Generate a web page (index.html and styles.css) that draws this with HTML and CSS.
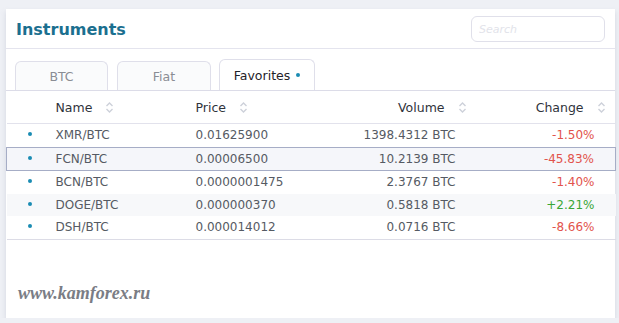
FILE: index.html
```
<!DOCTYPE html>
<html lang="en">

<head>
    <meta charset="UTF-8">
    <meta name="viewport" content="width=device-width, initial-scale=1.0">
    <title>Instruments</title>
    <link rel="stylesheet" href="styles.css">
</head>

<body>
    <div class="card">
        <div class="head">
            <h1 class="title">Instruments</h1>
            <input class="search" type="text" placeholder="Search">
        </div>

        <div class="tabs">
            <div class="tab tab_btc">BTC</div>
            <div class="tab tab_fiat">Fiat</div>
            <div class="tab tab_fav active">Favorites <span class="tab_dot"></span></div>
        </div>

        <table class="list">
            <colgroup>
                <col class="c_dot">
                <col class="c_name">
                <col class="c_price">
                <col class="c_vol">
                <col class="c_chg">
            </colgroup>
            <thead>
                <tr>
                    <th></th>
                    <th class="left">Name <span class="sort"><svg width="9" height="13" viewBox="0 0 9 13"><path d="M1.5 5 L4.5 2 L7.5 5 M1.5 8 L4.5 11 L7.5 8" fill="none" stroke="#cdd1da" stroke-width="1.4"/></svg></span></th>
                    <th class="left">Price <span class="sort"><svg width="9" height="13" viewBox="0 0 9 13"><path d="M1.5 5 L4.5 2 L7.5 5 M1.5 8 L4.5 11 L7.5 8" fill="none" stroke="#cdd1da" stroke-width="1.4"/></svg></span></th>
                    <th class="right">Volume <span class="sort"><svg width="9" height="13" viewBox="0 0 9 13"><path d="M1.5 5 L4.5 2 L7.5 5 M1.5 8 L4.5 11 L7.5 8" fill="none" stroke="#cdd1da" stroke-width="1.4"/></svg></span></th>
                    <th class="right">Change <span class="sort"><svg width="9" height="13" viewBox="0 0 9 13"><path d="M1.5 5 L4.5 2 L7.5 5 M1.5 8 L4.5 11 L7.5 8" fill="none" stroke="#cdd1da" stroke-width="1.4"/></svg></span></th>
                </tr>
            </thead>
            <tbody>
                <tr>
                    <td><span class="dot"></span></td>
                    <td>XMR/BTC</td>
                    <td>0.01625900</td>
                    <td class="right">1398.4312 BTC</td>
                    <td class="right down">-1.50%</td>
                </tr>
                <tr class="hover">
                    <td><span class="dot"></span></td>
                    <td>FCN/BTC</td>
                    <td>0.00006500</td>
                    <td class="right">10.2139 BTC</td>
                    <td class="right down">-45.83%</td>
                </tr>
                <tr>
                    <td><span class="dot"></span></td>
                    <td>BCN/BTC</td>
                    <td>0.0000001475</td>
                    <td class="right">2.3767 BTC</td>
                    <td class="right down">-1.40%</td>
                </tr>
                <tr class="odd">
                    <td><span class="dot"></span></td>
                    <td>DOGE/BTC</td>
                    <td>0.000000370</td>
                    <td class="right">0.5818 BTC</td>
                    <td class="right up">+2.21%</td>
                </tr>
                <tr>
                    <td><span class="dot"></span></td>
                    <td>DSH/BTC</td>
                    <td>0.000014012</td>
                    <td class="right">0.0716 BTC</td>
                    <td class="right down">-8.66%</td>
                </tr>
            </tbody>
        </table>

        <div class="mark">www.kamforex.ru</div>
    </div>
</body>

</html>
```

FILE: styles.css
```
body {
    margin: 0;
    background-color: #eef0f5;
    font-family: "DejaVu Sans", Verdana, sans-serif;
    font-size: 12px;
    color: #555a63;
}

.card {
    width: 609px;
    height: 309px;
    margin-left: 6px;
    margin-top: 9px;
    background-color: #fff;
    box-shadow: 0 3px 5px rgba(180, 184, 200, 0.45);
    display: flex;
    flex-direction: column;
}

.head {
    height: 38px;
    flex-shrink: 0;
    border-bottom: 1px solid #e4e4ee;
    display: flex;
    align-items: center;
    justify-content: space-between;
    padding: 1px 10px 0 10px;
}

.title {
    margin: 0;
    font-size: 16px;
    font-weight: bold;
    color: #1b6f8f;
}

.search {
    width: 134px;
    height: 26px;
    box-sizing: border-box;
    border: 1px solid #e0e0ea;
    border-radius: 6px;
    padding: 0 7px;
    font-family: "DejaVu Sans", sans-serif;
    font-size: 11px;
    font-style: italic;
}

.search::placeholder {
    color: #e2e3ea;
}

.tabs {
    display: flex;
    flex-shrink: 0;
    padding: 12px 0 0 9px;
    border-bottom: 1px solid #dcdce8;
    height: 29px;
}

.tab {
    height: 29px;
    box-sizing: border-box;
    border: 1px solid #dfdfea;
    border-bottom: none;
    border-radius: 6px 6px 0 0;
    background-color: #fafbfc;
    color: #8a8d94;
    font-size: 12.5px;
    display: flex;
    align-items: center;
    justify-content: center;
    padding-top: 1px;
}

.tab_btc {
    width: 93px;
    margin-right: 9px;
}

.tab_fiat {
    width: 94px;
    margin-right: 8px;
}

.tab_fav {
    width: 96px;
    height: 31px;
    margin-top: -2px;
    margin-bottom: -1px;
    background-color: #fff;
    color: #1f2228;
}

.tab_dot {
    display: inline-block;
    width: 4px;
    height: 4px;
    border-radius: 50%;
    background-color: #1a8cb3;
    margin-left: 6px;
    margin-bottom: 2px;
}

.list {
    width: 609px;
    border-collapse: collapse;
    table-layout: fixed;
}

.c_dot { width: 43px; }
.c_name { width: 140px; }
.c_price { width: 150px; }
.c_vol { width: 136px; }
.c_chg { width: 140px; }

.list th {
    height: 32px;
    font-weight: normal;
    color: #2f333b;
    font-size: 12.5px;
    border-bottom: 1px solid #e2e2ec;
    padding: 0 6px;
    white-space: nowrap;
}

.list th.left {
    text-align: left;
}

.list th.right {
    text-align: right;
    padding-right: 9px;
}

.list th:last-child {
    padding-right: 10px;
}

.sort {
    display: inline-block;
    vertical-align: middle;
    margin-left: 9px;
    margin-top: -2px;
}

.sort svg {
    display: block;
}

.list td {
    height: 22.5px;
    padding: 0 6px;
    white-space: nowrap;
}

.list td.right {
    text-align: right;
    padding-right: 20px;
}

.list td:last-child {
    padding-right: 21px;
}

.list tbody tr:last-child td {
    border-bottom: 1px solid #dcdce6;
}

.dot {
    display: block;
    width: 4px;
    height: 4px;
    border-radius: 50%;
    background-color: #1a8cb3;
    margin-left: 15px;
    margin-bottom: 2px;
}

.odd td {
    background-color: #f7f8fa;
}

.hover td {
    background-color: #f5f6fa;
    border-top: 1px solid #a6adc6;
    border-bottom: 1px solid #a6adc6;
}

.hover td:first-child {
    border-left: 1px solid #a6adc6;
}

.hover td:last-child {
    border-right: 1px solid #a6adc6;
}

.down {
    color: #e2534c;
}

.up {
    color: #3aa635;
}

.mark {
    margin-top: auto;
    padding: 0 0 14px 12px;
    font-family: "Liberation Serif", Georgia, serif;
    font-weight: bold;
    font-style: italic;
    font-size: 18px;
    color: #7a7d85;
}
```
